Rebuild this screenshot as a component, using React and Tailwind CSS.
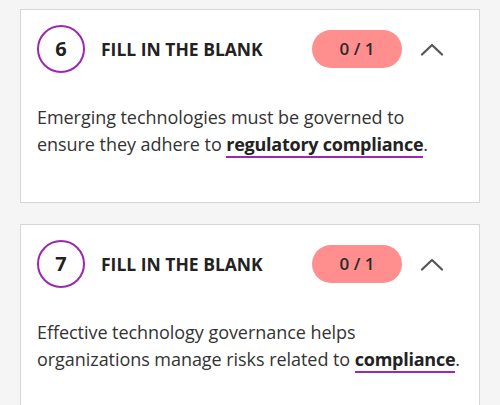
import React from "react";

function Chevron() {
  return (
    <svg width="24" height="14" viewBox="0 0 24 14" fill="none">
      <path d="M2 12.5 L12 3 L22 12.5" stroke="#555" strokeWidth="2.2" strokeLinecap="round" strokeLinejoin="round" />
    </svg>
  );
}

function Card({ n, children }) {
  return (
    <div className="bg-white border border-[#d6d6d6] pl-[16px] pr-[8px] pt-[15px] pb-[44px]">
      <div className="flex items-center">
        <div className="w-[48px] h-[48px] rounded-full border-[2.5px] border-[#9c27b0] flex items-center justify-center text-[20px] font-bold text-[#222]">
          {n}
        </div>
        <div className="ml-[16px] text-[17.5px] font-bold text-[#222]">FILL IN THE BLANK</div>
        <div className="ml-auto w-[90px] h-[38px] rounded-full bg-[#ff8f8f] flex items-center justify-center text-[17px] font-semibold text-[#2a2a2a]">
          0 / 1
        </div>
        <div className="ml-[18px] mr-[27px] flex items-center">
          <Chevron />
        </div>
      </div>
      <p className="mt-[31px] text-[18px] leading-[27px] text-[#333] whitespace-nowrap tracking-[-0.05px]">{children}</p>
    </div>
  );
}

export default function App() {
  return (
    <div
      className="w-[500px] h-[405px] overflow-hidden bg-[#f5f5f5] px-[20px] pt-[9px] flex flex-col gap-[21px]"
      style={{ fontFamily: '"Open Sans", sans-serif' }}
    >
      <Card n="6">
        Emerging technologies must be governed to
        <br />
        ensure they adhere to{" "}
        <span className="font-bold text-[#222] border-b-2 border-[#9c27b0] tracking-[-0.25px]">regulatory compliance</span>.
      </Card>
      <Card n="7">
        Effective technology governance helps
        <br />
        organizations manage risks related to{" "}
        <span className="font-bold text-[#222] border-b-2 border-[#9c27b0] tracking-[-0.25px]">compliance</span>.
      </Card>
    </div>
  );
}
